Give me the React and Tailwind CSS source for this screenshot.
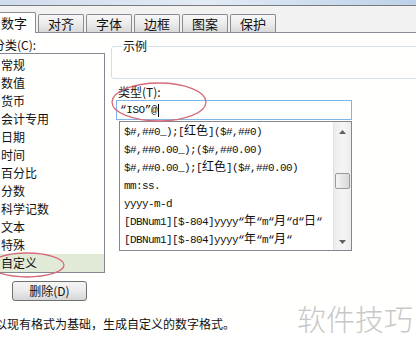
const tabs = ["对齐", "字体", "边框", "图案", "保护"];

const categories = [
  "常规",
  "数值",
  "货币",
  "会计专用",
  "日期",
  "时间",
  "百分比",
  "分数",
  "科学记数",
  "文本",
  "特殊",
  "自定义",
];

const formats = [
  "$#,##0_);[红色]($#,##0)",
  "$#,##0.00_);($#,##0.00)",
  "$#,##0.00_);[红色]($#,##0.00)",
  "mm:ss.",
  "yyyy-m-d",
  "[DBNum1][$-804]yyyy“年“m“月“d“日“",
  "[DBNum1][$-804]yyyy“年“m“月“",
];

// split a format string so the CJK chars get full width
const FormatText = ({ text }) => {
  const parts = text.split(/([\u4e00-\u9fff]+)/);
  return (
    <>
      {parts.map((p, i) =>
        /[\u4e00-\u9fff]/.test(p) ? (
          <span key={i} className="font-['Noto_Sans_CJK_SC',sans-serif] text-[12px] leading-[14px] tracking-normal">
            {p}
          </span>
        ) : (
          <span key={i}>{p}</span>
        )
      )}
    </>
  );
};

const App = () => {
  return (
    <div className="relative w-[416px] h-[345px] overflow-hidden bg-white font-['Noto_Sans_CJK_SC',sans-serif] text-[12px] text-[#111]">
      {/* window strip */}
      <div className="h-[6px] bg-gradient-to-r from-[#cfdcec] via-[#e2ebf6] to-[#bcd1e8] border-b border-[#7b7b7b]" />

      {/* tabs */}
      <div className="h-[26px] bg-[#f2f2f2] flex items-end gap-[2px]">
        <div className="relative z-10 -ml-[4px] -mb-[1px] w-[40px] h-[21px] pl-[4px] bg-white border border-b-0 border-[#898c95] rounded-t-[2px] text-[13px] leading-[19px]">
          数字
        </div>
        {tabs.map((t) => (
          <div
            key={t}
            className="w-[46px] h-[18px] border border-b-0 border-[#898c95] rounded-t-[2px] bg-gradient-to-b from-[#f7f7f7] via-[#ececec] to-[#d9d9d9] text-center text-[13px] leading-[17px]"
          >
            {t}
          </div>
        ))}
      </div>

      {/* panel */}
      <div className="border-t border-[#898c95] bg-[#fffffd] flex flex-col">
        <div className="flex">
          {/* left column */}
          <div className="-ml-[8px] w-[113px] shrink-0">
            <div className="pt-[4px] pl-[1px] leading-[16px]">分类(C):</div>
            <div className="ml-[4px] w-[109px] border border-[#828790] pt-[2px]">
              {categories.map((c) => (
                <div
                  key={c}
                  className={
                    c === "自定义"
                      ? "h-[18px] leading-[18px] pl-[4px] bg-[#e1ead6]"
                      : "h-[18px] leading-[18px] pl-[4px]"
                  }
                >
                  {c}
                </div>
              ))}
            </div>
            <button
              type="button"
              className="mt-[8px] ml-[20px] w-[75px] h-[20px] border border-[#707070] rounded-[3px] bg-gradient-to-b from-[#f4f4f4] via-[#ebebeb] to-[#d6d6d6] text-[12px] leading-[18px] text-[#111]"
            >
              删除(D)
            </button>
          </div>

          {/* right column */}
          <div className="ml-[6px] flex-1">
            <fieldset className="mt-[5px] w-[320px] h-[41px] border border-[#d5dfe5] rounded-[3px]">
              <legend className="ml-[10px] px-[1px] leading-[16px]">示例</legend>
            </fieldset>

            <div className="mt-[5px] pl-[7px] leading-[16px]">类型(T):</div>
            <div className="ml-[5px] w-[236px] h-[20px] border border-[#7eb4ea] bg-white pl-[3px] flex items-center font-['Liberation_Mono',monospace] text-[11px] tracking-[-0.4px]">
              <span>“ISO”@</span>
              <span className="ml-[1px] w-[1px] h-[13px] bg-black" />
            </div>

            <div className="mt-[1px] ml-[8px] w-[233px] h-[130px] border border-[#828790] bg-white flex">
              <div className="flex-1 pt-[1px] pl-[4px] font-['Liberation_Mono',monospace] text-[11px] tracking-[-0.6px]">
                {formats.map((f) => (
                  <div key={f} className="h-[18px] leading-[18px] whitespace-nowrap">
                    <FormatText text={f} />
                  </div>
                ))}
              </div>
              {/* scrollbar */}
              <div className="w-[18px] bg-gradient-to-r from-[#ececec] via-[#f5f5f5] to-[#ececec] border-l border-[#e4e4e4] flex flex-col">
                <div className="h-[20px] flex items-center justify-center">
                  <svg width="7" height="4" viewBox="0 0 7 4">
                    <path d="M3.5 0 L7 4 L0 4 Z" fill="#606060" />
                  </svg>
                </div>
                <div className="flex-1">
                  <div className="mt-[31px] mx-[1px] h-[16px] border border-[#9b9b9b] rounded-[2px] bg-gradient-to-r from-[#f4f4f4] to-[#d8d8d8]" />
                </div>
                <div className="h-[16px] flex items-center justify-center">
                  <svg width="7" height="4" viewBox="0 0 7 4">
                    <path d="M0 0 L7 0 L3.5 4 Z" fill="#606060" />
                  </svg>
                </div>
              </div>
            </div>
          </div>
        </div>

        <div className="mt-[15px] -ml-[5px] leading-[16px] whitespace-nowrap">
          以现有格式为基础，生成自定义的数字格式。
        </div>
      </div>

      {/* watermark */}
      <div className="absolute right-[3px] top-[299px] text-[29px] leading-[38px] text-[#c8c8c8] font-['Noto_Sans_CJK_SC',sans-serif] font-light">
        软件技巧
      </div>

      {/* red annotation marks */}
      <svg className="absolute inset-0 pointer-events-none" width="416" height="345">
        <ellipse cx="27" cy="265" rx="37" ry="12" fill="none" stroke="#d66a78" strokeWidth="1.3" />
        <ellipse cx="159" cy="102" rx="47" ry="19" fill="none" stroke="#d66a78" strokeWidth="1.3" />
      </svg>
    </div>
  );
};

export default App;
